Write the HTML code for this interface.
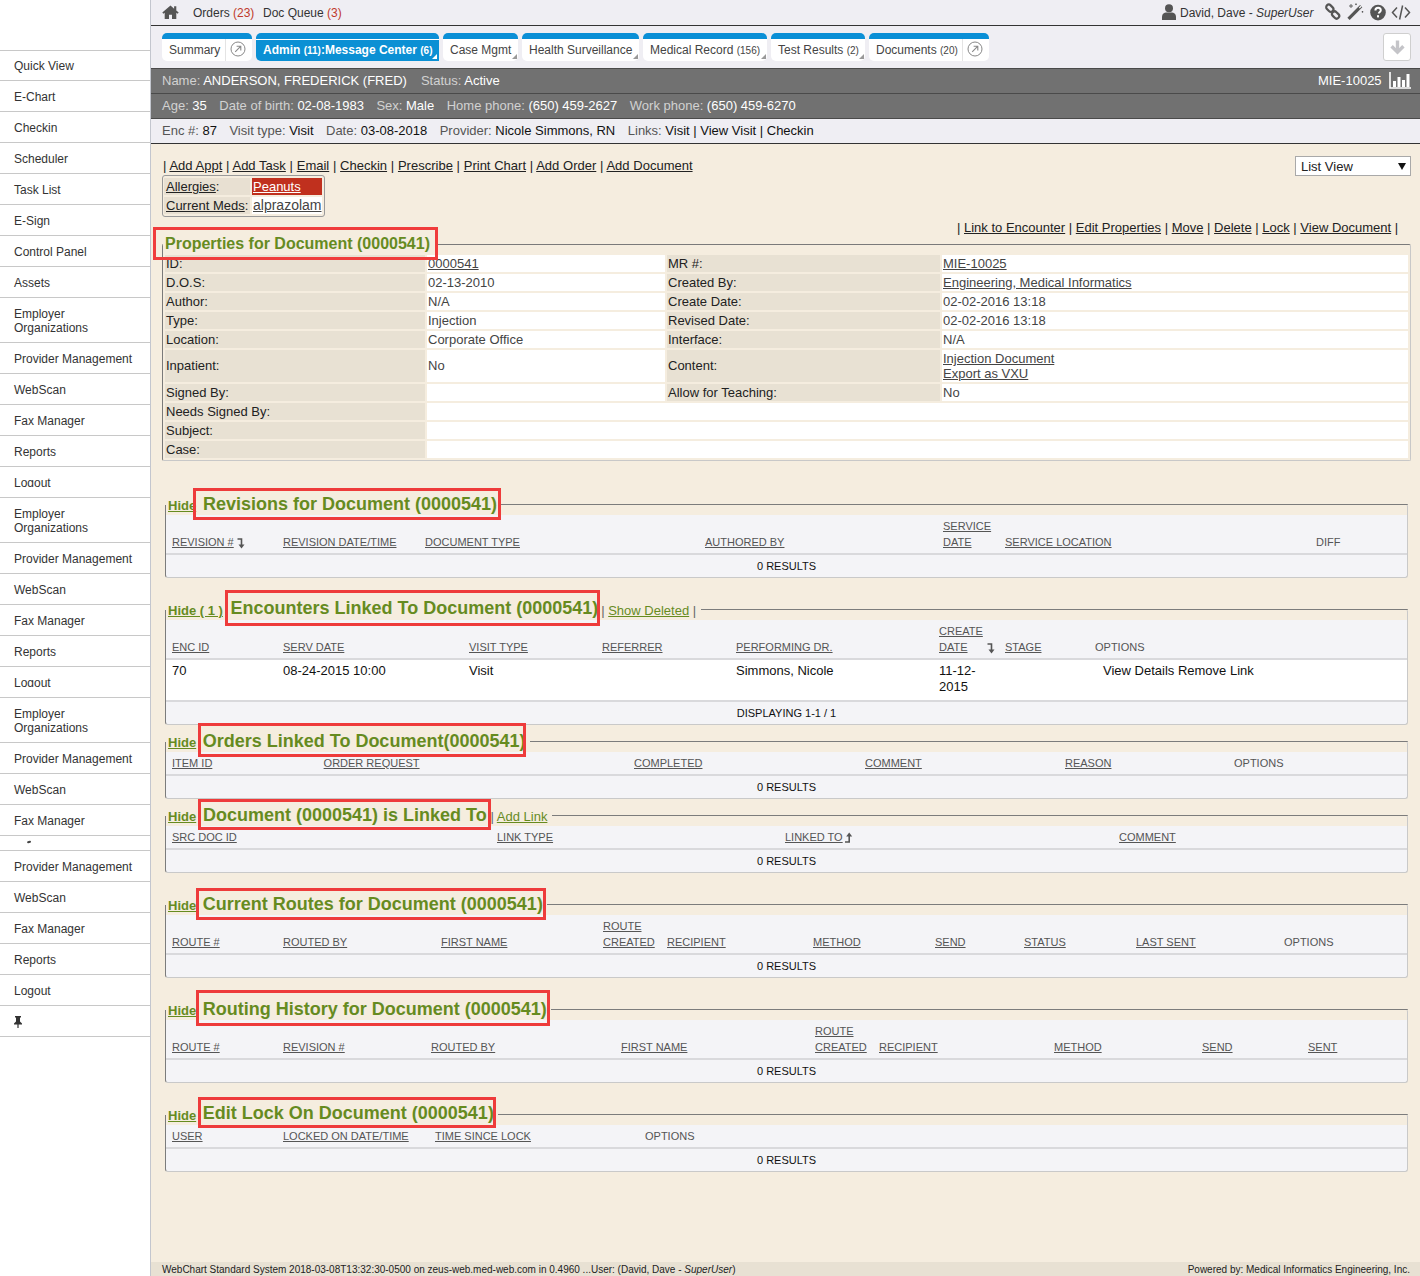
<!DOCTYPE html>
<html><head><meta charset="utf-8">
<style>
*{box-sizing:border-box;margin:0;padding:0}
html,body{width:1420px;height:1276px;overflow:hidden;background:#f5eddf;font-family:"Liberation Sans",sans-serif;color:#222}
.abs{position:absolute}
#side{position:absolute;left:0;top:0;width:151px;height:1276px;background:#fff;border-right:1px solid #c3c6ce}
#side .it{position:absolute;left:0;width:150px;border-top:1px solid #c8c8c8;font-size:12px;color:#333;padding-left:14px;line-height:14px}
#topbar{position:absolute;left:151px;top:0;width:1269px;height:26px;background:#efeef3;border-bottom:1px solid #333}
#tabbar{position:absolute;left:151px;top:26px;width:1269px;height:42px;background:#efeef3}
.tab{position:absolute;top:33px;height:28px;background:#fff;border-top:6px solid #0a8fd6;border-radius:5px;font-size:12px;color:#444;line-height:16px;white-space:nowrap}
.tab small{font-size:10px}
#pname{position:absolute;left:151px;top:68px;width:1269px;height:26px;background:#717171;border-top:1px solid #4a4a4a;border-bottom:1px solid #4a4a4a;font-size:13px;color:#fff}
#page{position:absolute;left:151px;top:94px;width:1269px;height:25px;background:#717171;border-bottom:1px solid #4a4a4a;font-size:13px;color:#fff}
#penc{position:absolute;left:151px;top:119px;width:1269px;height:25px;background:#efeef3;border-bottom:1px solid #333;font-size:13px;color:#111}
.lbl{color:#d2d2d2}
.sp{display:inline-block;width:12.5px}
.lbl2{color:#555}
u{text-decoration:underline}
a{color:inherit}
.t13{font-size:13px}
.legend{position:absolute;font-weight:bold;font-size:18px;color:#668b1f;white-space:nowrap}
.rbox{position:absolute;border:3px solid #ee3b3b}
.fs{position:absolute;left:165px;width:1244px;border-left:1px solid #7a7a7a;border-top:1px solid #7a7a7a;border-right:1px solid #c8c8c8;border-bottom:1px solid #c8c8c8;border-radius:3px}
.tbl{position:absolute;left:166px;width:1242px;background:#f4f4f7}
.hd{position:absolute;font-size:11px;color:#555;text-decoration:underline;white-space:nowrap;line-height:16px}
.hdn{position:absolute;font-size:11px;color:#555;white-space:nowrap;line-height:16px}
.res{position:absolute;font-size:11px;color:#111;white-space:nowrap}
.hide{position:absolute;font-size:13px;font-weight:bold;color:#668b1f;text-decoration:underline;white-space:nowrap}
.pc{position:absolute;font-size:13px;line-height:15px;padding-left:1px;white-space:nowrap}
.pl{background:#e8e1d3;color:#222}
.pv{background:#fff;color:#444}
</style></head><body>

<div id="side">
<div class="it" style="top:50px;height:30px;padding-top:8px">Quick View</div>
<div class="it" style="top:80px;height:31px;padding-top:9px">E-Chart</div>
<div class="it" style="top:111px;height:31px;padding-top:9px">Checkin</div>
<div class="it" style="top:142px;height:31px;padding-top:9px">Scheduler</div>
<div class="it" style="top:173px;height:31px;padding-top:9px">Task List</div>
<div class="it" style="top:204px;height:31px;padding-top:9px">E-Sign</div>
<div class="it" style="top:235px;height:31px;padding-top:9px">Control Panel</div>
<div class="it" style="top:266px;height:31px;padding-top:9px">Assets</div>
<div class="it" style="top:297px;height:45px;padding-top:9px">Employer<br>Organizations</div>
<div class="it" style="top:342px;height:31px;padding-top:9px">Provider Management</div>
<div class="it" style="top:373px;height:31px;padding-top:9px">WebScan</div>
<div class="it" style="top:404px;height:31px;padding-top:9px">Fax Manager</div>
<div class="it" style="top:435px;height:31px;padding-top:9px">Reports</div>
<div class="it" style="top:466px;height:31px"><div style="position:absolute;left:14px;top:9px;height:11px;overflow:hidden"><div style="margin-top:0px">Logout</div></div></div>
<div class="it" style="top:497px;height:45px;padding-top:9px">Employer<br>Organizations</div>
<div class="it" style="top:542px;height:31px;padding-top:9px">Provider Management</div>
<div class="it" style="top:573px;height:31px;padding-top:9px">WebScan</div>
<div class="it" style="top:604px;height:31px;padding-top:9px">Fax Manager</div>
<div class="it" style="top:635px;height:31px;padding-top:9px">Reports</div>
<div class="it" style="top:666px;height:31px"><div style="position:absolute;left:14px;top:9px;height:11px;overflow:hidden"><div style="margin-top:0px">Logout</div></div></div>
<div class="it" style="top:697px;height:45px;padding-top:9px">Employer<br>Organizations</div>
<div class="it" style="top:742px;height:31px;padding-top:9px">Provider Management</div>
<div class="it" style="top:773px;height:31px;padding-top:9px">WebScan</div>
<div class="it" style="top:804px;height:31px;padding-top:9px">Fax Manager</div>
<div class="it" style="top:835px;height:15px"><div class="abs" style="left:27px;top:5px;width:4px;height:1.5px;background:#444;border-radius:1px;transform:rotate(-15deg)"></div></div>
<div class="it" style="top:850px;height:31px;padding-top:9px">Provider Management</div>
<div class="it" style="top:881px;height:31px;padding-top:9px">WebScan</div>
<div class="it" style="top:912px;height:31px;padding-top:9px">Fax Manager</div>
<div class="it" style="top:943px;height:31px;padding-top:9px">Reports</div>
<div class="it" style="top:974px;height:31px;padding-top:9px">Logout</div>
<div class="it" style="top:1005px;height:31px"><svg style="position:absolute;left:13px;top:10px" width="10" height="12" viewBox="0 0 10 12"><path d="M2 0h6v1.5H7v4l2 2v1H5.6V12h-1.2V8.5H1v-1l2-2v-4H2z" fill="#333"/></svg></div>
<div class="it" style="top:1036px;height:1px"></div>
</div>

<div id="topbar">
<svg class="abs" style="left:11px;top:5px" width="17" height="14" viewBox="0 0 17 14"><path d="M8.5 0.5L0.3 7.6l1.1 1.2 1.3-1.1V14h4.3V9.8h3V14h4.3V7.7l1.3 1.1 1.1-1.2-2.4-2.1V1.2h-2.2v2.5z" fill="#555"/></svg>
<div class="abs" style="left:42px;top:6px;font-size:12px;color:#333;white-space:nowrap">Orders <span style="color:#c0392b">(23)</span></div>
<div class="abs" style="left:112px;top:6px;font-size:12px;color:#333;white-space:nowrap">Doc Queue <span style="color:#c0392b">(3)</span></div>
<svg class="abs" style="left:1011px;top:4px" width="14" height="16" viewBox="0 0 14 16"><circle cx="7" cy="4.2" r="4" fill="#555"/><path d="M0 16v-3.5C0 10 2.5 8.6 4 8.6h6c1.5 0 4 1.4 4 3.9V16z" fill="#555"/></svg>
<div class="abs" style="left:1029px;top:6px;font-size:12px;color:#333;white-space:nowrap">David, Dave - <i>SuperUser</i></div>
<svg class="abs" style="left:1173px;top:3px" width="18" height="18" viewBox="0 0 18 18"><g fill="none" stroke="#555" stroke-width="2.2"><rect x="1.8" y="2.6" width="8" height="5.2" rx="2.6" transform="rotate(45 5.8 5.2)"/><rect x="7.6" y="9.4" width="8" height="5.2" rx="2.6" transform="rotate(45 11.6 12)"/></g></svg>
<svg class="abs" style="left:1196px;top:3px" width="18" height="18" viewBox="0 0 18 18"><path d="M1.5 15.8L14.2 3.1" stroke="#555" stroke-width="3.2"/><path d="M12.3 5L14.2 3.1" stroke="#fff" stroke-width="1.2"/><path d="M4 1v4M2 3h4M9 0.5v1.6M8.2 1.3h1.6M15.5 8v1.6M14.7 8.8h1.6" stroke="#555" stroke-width="0.9"/></svg>
<svg class="abs" style="left:1219px;top:4px" width="17" height="17" viewBox="0 0 17 17"><circle cx="8" cy="8.6" r="7.8" fill="#555"/><path d="M5.4 6.4c0-1.8 1.2-2.7 2.7-2.7s2.7 0.9 2.7 2.5c0 1.7-2 1.8-2 3.4" fill="none" stroke="#fff" stroke-width="2"/><rect x="7" y="11.2" width="2" height="2.2" fill="#fff"/></svg>
<svg class="abs" style="left:1240px;top:4px" width="20" height="17" viewBox="0 0 20 17"><path d="M6 3.5L1.5 8.5 6 13.5M14 3.5l4.5 5-4.5 5M11.6 1.5L8.6 15.5" fill="none" stroke="#555" stroke-width="1.5"/></svg>
</div>
<div id="tabbar"></div>
<div class="tab" style="left:162px;width:90px"><span class="abs" style="left:7px;top:3px">Summary</span><div class="abs" style="left:63px;top:0;width:1px;height:22px;background:#e4e4e4"></div><svg class="abs" style="left:68px;top:2px" width="16" height="16" viewBox="0 0 16 16"><circle cx="8" cy="8" r="7" fill="none" stroke="#888" stroke-width="1"/><path d="M5.2 10.8L10.6 5.4M6.6 5.2h4.2v4.2" fill="none" stroke="#888" stroke-width="1.1"/></svg></div>
<div class="tab" style="left:256px;width:183px;background:#0b90d4;border-radius:5px 5px 0 5px"><div class="abs" style="left:0;top:0;width:183px;height:1px;background:#fff"></div><span class="abs" style="left:7px;top:3px;color:#fff;font-weight:bold">Admin <small>(11)</small>:Message Center <small>(6)</small></span><svg class="abs" style="left:176px;top:15px" width="5" height="5" viewBox="0 0 5 5"><path d="M5 0V5H0z" fill="#fff"/></svg></div>
<div class="tab" style="left:443px;width:75px"><span class="abs" style="left:7px;top:3px">Case Mgmt</span><svg class="abs" style="left:69px;top:15px" width="5" height="5" viewBox="0 0 5 5"><path d="M5 0V5H0z" fill="#999"/></svg></div>
<div class="tab" style="left:522px;width:117px"><span class="abs" style="left:7px;top:3px">Health Surveillance</span><svg class="abs" style="left:111px;top:15px" width="5" height="5" viewBox="0 0 5 5"><path d="M5 0V5H0z" fill="#999"/></svg></div>
<div class="tab" style="left:643px;width:124px"><span class="abs" style="left:7px;top:3px">Medical Record <small>(156)</small></span><svg class="abs" style="left:118px;top:15px" width="5" height="5" viewBox="0 0 5 5"><path d="M5 0V5H0z" fill="#999"/></svg></div>
<div class="tab" style="left:771px;width:94px"><span class="abs" style="left:7px;top:3px">Test Results <small>(2)</small></span><svg class="abs" style="left:88px;top:15px" width="5" height="5" viewBox="0 0 5 5"><path d="M5 0V5H0z" fill="#999"/></svg></div>
<div class="tab" style="left:869px;width:120px"><span class="abs" style="left:7px;top:3px">Documents <small>(20)</small></span><div class="abs" style="left:93px;top:0;width:1px;height:22px;background:#e4e4e4"></div><svg class="abs" style="left:98px;top:2px" width="16" height="16" viewBox="0 0 16 16"><circle cx="8" cy="8" r="7" fill="none" stroke="#888" stroke-width="1"/><path d="M5.2 10.8L10.6 5.4M6.6 5.2h4.2v4.2" fill="none" stroke="#888" stroke-width="1.1"/></svg></div>
<div class="abs" style="left:1383px;top:33px;width:28px;height:28px;background:#fff;border:1px solid #cfcfcf;border-radius:3px"><svg class="abs" style="left:5px;top:5px" width="17" height="17" viewBox="0 0 17 17"><path d="M8.5 1.5v11" stroke="#c4c4c8" stroke-width="3.4"/><path d="M2.6 7.3L8.5 13.2l5.9-5.9" fill="none" stroke="#c4c4c8" stroke-width="3.4" stroke-linejoin="miter"/></svg></div>
<div id="pname"><div class="abs" style="left:11px;top:4px;white-space:nowrap"><span class="lbl">Name:</span> ANDERSON, FREDERICK (FRED)<span style="display:inline-block;width:14px"></span><span class="lbl">Status:</span> Active</div>
<div class="abs" style="left:1167px;top:4px">MIE-10025</div>
<svg class="abs" style="left:1238px;top:3px" width="22" height="17" viewBox="0 0 22 17"><path d="M1 0v16h21" fill="none" stroke="#fff" stroke-width="1.6"/><rect x="4" y="9" width="3" height="6" fill="#fff"/><rect x="8.5" y="5" width="3" height="10" fill="#fff"/><rect x="13" y="8" width="3" height="7" fill="#fff"/><rect x="17.5" y="2" width="3" height="13" fill="#fff"/></svg>
</div>
<div id="page"><div class="abs" style="left:11px;top:4px;white-space:nowrap"><span class="lbl">Age:</span> 35<span class="sp"></span><span class="lbl">Date of birth:</span> 02-08-1983<span class="sp"></span><span class="lbl">Sex:</span> Male<span class="sp"></span><span class="lbl">Home phone:</span> (650) 459-2627<span class="sp"></span><span class="lbl">Work phone:</span> (650) 459-6270</div></div>
<div id="penc"><div class="abs" style="left:11px;top:4px;white-space:nowrap"><span class="lbl2">Enc #:</span> 87<span class="sp"></span><span class="lbl2">Visit type:</span> Visit<span class="sp"></span><span class="lbl2">Date:</span> 03-08-2018<span class="sp"></span><span class="lbl2">Provider:</span> Nicole Simmons, RN<span class="sp"></span><span class="lbl2">Links:</span> Visit | View Visit | Checkin</div></div>


<!-- content -->
<div class="abs t13" style="left:163px;top:158px;white-space:nowrap;color:#222;word-spacing:0.13px">| <u>Add Appt</u> | <u>Add Task</u> | <u>Email</u> | <u>Checkin</u> | <u>Prescribe</u> | <u>Print Chart</u> | <u>Add Order</u> | <u>Add Document</u></div>
<div class="abs" style="left:1295px;top:156px;width:116px;height:20px;background:#fff;border:1px solid #a9a9a9;font-size:13px;color:#222;padding:2px 0 0 5px">List View<svg class="abs" style="left:102px;top:6px" width="8" height="7" viewBox="0 0 8 7"><path d="M0 0h8L4 7z" fill="#111"/></svg></div>
<div class="abs" style="left:162px;top:175px;width:163px;height:42px;border:1px solid #9a9a9a;border-radius:3px"></div>
<div class="abs" style="left:164px;top:178px;width:86px;height:17px;background:#e8e0d2"></div>
<div class="abs" style="left:252px;top:178px;width:70px;height:17px;background:#c0301e"></div>
<div class="abs" style="left:164px;top:197px;width:86px;height:17px;background:#e8e0d2"></div>
<div class="abs" style="left:252px;top:197px;width:70px;height:17px;background:#fff"></div>
<div class="abs t13" style="left:166px;top:179px;color:#222"><u>Allergies</u>:</div>
<div class="abs t13" style="left:253px;top:179px;color:#fff"><u>Peanuts</u></div>
<div class="abs t13" style="left:166px;top:198px;color:#222"><u>Current Meds</u>:</div>
<div class="abs" style="left:253px;top:197px;color:#444;font-size:14px"><u>alprazolam</u></div>
<div class="abs t13" style="left:957px;top:220px;white-space:nowrap;color:#222">| <u>Link to Encounter</u> | <u>Edit Properties</u> | <u>Move</u> | <u>Delete</u> | <u>Lock</u> | <u>View Document</u> |</div>
<div class="abs" style="left:162px;top:244px;width:1249px;height:217px;border-left:1px solid #7a7a7a;border-top:1px solid #7a7a7a;border-right:1px solid #c8c8c8;border-bottom:1px solid #c8c8c8;border-radius:2px"></div>
<div class="pc pl" style="left:165px;top:255px;width:260px;height:17px;padding-top:1px">ID:</div>
<div class="pc pv" style="left:427px;top:255px;width:238px;height:17px;padding-top:1px"><u>0000541</u></div>
<div class="pc pl" style="left:667px;top:255px;width:273px;height:17px;padding-top:1px">MR #:</div>
<div class="pc pv" style="left:942px;top:255px;width:466px;height:17px;padding-top:1px"><u>MIE-10025</u></div>
<div class="pc pl" style="left:165px;top:274px;width:260px;height:17px;padding-top:1px">D.O.S:</div>
<div class="pc pv" style="left:427px;top:274px;width:238px;height:17px;padding-top:1px">02-13-2010</div>
<div class="pc pl" style="left:667px;top:274px;width:273px;height:17px;padding-top:1px">Created By:</div>
<div class="pc pv" style="left:942px;top:274px;width:466px;height:17px;padding-top:1px"><u>Engineering, Medical Informatics</u></div>
<div class="pc pl" style="left:165px;top:293px;width:260px;height:17px;padding-top:1px">Author:</div>
<div class="pc pv" style="left:427px;top:293px;width:238px;height:17px;padding-top:1px">N/A</div>
<div class="pc pl" style="left:667px;top:293px;width:273px;height:17px;padding-top:1px">Create Date:</div>
<div class="pc pv" style="left:942px;top:293px;width:466px;height:17px;padding-top:1px">02-02-2016 13:18</div>
<div class="pc pl" style="left:165px;top:312px;width:260px;height:17px;padding-top:1px">Type:</div>
<div class="pc pv" style="left:427px;top:312px;width:238px;height:17px;padding-top:1px">Injection</div>
<div class="pc pl" style="left:667px;top:312px;width:273px;height:17px;padding-top:1px">Revised Date:</div>
<div class="pc pv" style="left:942px;top:312px;width:466px;height:17px;padding-top:1px">02-02-2016 13:18</div>
<div class="pc pl" style="left:165px;top:331px;width:260px;height:17px;padding-top:1px">Location:</div>
<div class="pc pv" style="left:427px;top:331px;width:238px;height:17px;padding-top:1px">Corporate Office</div>
<div class="pc pl" style="left:667px;top:331px;width:273px;height:17px;padding-top:1px">Interface:</div>
<div class="pc pv" style="left:942px;top:331px;width:466px;height:17px;padding-top:1px">N/A</div>
<div class="pc pl" style="left:165px;top:350px;width:260px;height:32px;padding-top:8px">Inpatient:</div>
<div class="pc pv" style="left:427px;top:350px;width:238px;height:32px;padding-top:8px">No</div>
<div class="pc pl" style="left:667px;top:350px;width:273px;height:32px;padding-top:8px">Content:</div>
<div class="pc pv" style="left:942px;top:350px;width:466px;height:32px;padding-top:1px"><u>Injection Document</u><br><u>Export as VXU</u></div>
<div class="pc pl" style="left:165px;top:384px;width:260px;height:17px;padding-top:1px">Signed By:</div>
<div class="pc pv" style="left:427px;top:384px;width:238px;height:17px;padding-top:1px"></div>
<div class="pc pl" style="left:667px;top:384px;width:273px;height:17px;padding-top:1px">Allow for Teaching:</div>
<div class="pc pv" style="left:942px;top:384px;width:466px;height:17px;padding-top:1px">No</div>
<div class="pc pl" style="left:165px;top:403px;width:260px;height:17px;padding-top:1px">Needs Signed By:</div>
<div class="pc pv" style="left:427px;top:403px;width:981px;height:17px;padding-top:1px"></div>
<div class="pc pl" style="left:165px;top:422px;width:260px;height:17px;padding-top:1px">Subject:</div>
<div class="pc pv" style="left:427px;top:422px;width:981px;height:17px;padding-top:1px"></div>
<div class="pc pl" style="left:165px;top:441px;width:260px;height:17px;padding-top:1px">Case:</div>
<div class="pc pv" style="left:427px;top:441px;width:981px;height:17px;padding-top:1px"></div>
<div class="abs" style="left:163px;top:243px;width:273px;height:3px;background:#f5eddf"></div>
<div class="abs" style="left:165px;top:235px;font-size:16px;font-weight:bold;color:#668b1f;white-space:nowrap">Properties for Document (0000541)</div>
<div class="abs" style="left:153px;top:227px;width:285px;height:33px;border:3px solid #f03c3c"></div>
<!-- sections -->
<div class="abs" style="left:166px;top:515px;width:1241px;height:38px;background:#f4f4f7"></div>
<div class="hd" style="left:172px;top:534px">REVISION #</div>
<div class="hd" style="left:283px;top:534px">REVISION DATE/TIME</div>
<div class="hd" style="left:425px;top:534px">DOCUMENT TYPE</div>
<div class="hd" style="left:705px;top:534px">AUTHORED BY</div>
<div class="hd" style="left:943px;top:518px">SERVICE<br>DATE</div>
<div class="hd" style="left:1005px;top:534px">SERVICE LOCATION</div>
<div class="hdn" style="left:1316px;top:534px">DIFF</div>
<svg class="abs" style="left:237px;top:538px" width="8" height="11" viewBox="0 0 8 11"><path d="M0.5 1h4v6" fill="none" stroke="#555" stroke-width="1.6"/><path d="M1.5 6.5h6L4.5 10.5z" fill="#555"/></svg>
<div class="abs" style="left:166px;top:553px;width:1241px;height:2px;background:#d9d9dc"></div>
<div class="abs" style="left:166px;top:555px;width:1241px;height:22px;background:#f4f4f7"></div>
<div class="res" style="left:166px;top:558px;width:1241px;text-align:center;line-height:16px">0 RESULTS</div>
<div class="abs" style="left:165px;top:504px;width:1243px;height:74px;border-left:1px solid #7c7c7c;border-right:1px solid #c9c9c9;border-bottom:1px solid #c9c9c9;border-radius:0 3px 3px 3px"></div>
<div class="abs" style="left:501px;top:504px;width:907px;height:1px;background:#7c7c7c;border-top-right-radius:2px"></div>
<div class="abs" style="left:164px;top:503px;width:3px;height:2px;background:#f5eddf"></div>
<div class="hide" style="left:168px;top:498.0px">Hide</div>
<div class="legend" style="left:203px;top:493.7px;line-height:20px">Revisions for Document (0000541)</div>
<div class="rbox" style="left:193px;top:488px;width:308px;height:32px"></div>

<div class="abs" style="left:166px;top:620px;width:1241px;height:38px;background:#f4f4f7"></div>
<div class="hd" style="left:172px;top:639px">ENC ID</div>
<div class="hd" style="left:283px;top:639px">SERV DATE</div>
<div class="hd" style="left:469px;top:639px">VISIT TYPE</div>
<div class="hd" style="left:602px;top:639px">REFERRER</div>
<div class="hd" style="left:736px;top:639px">PERFORMING DR.</div>
<div class="hd" style="left:939px;top:623px">CREATE<br>DATE</div>
<div class="hd" style="left:1005px;top:639px">STAGE</div>
<div class="hdn" style="left:1095px;top:639px">OPTIONS</div>
<svg class="abs" style="left:987px;top:643px" width="8" height="11" viewBox="0 0 8 11"><path d="M0.5 1h4v6" fill="none" stroke="#555" stroke-width="1.6"/><path d="M1.5 6.5h6L4.5 10.5z" fill="#555"/></svg>
<div class="abs" style="left:166px;top:658px;width:1241px;height:2px;background:#d9d9dc"></div>
<div class="abs" style="left:166px;top:660px;width:1241px;height:40px;background:#fff"></div>
<div class="abs" style="left:172px;top:663px;font-size:13px;line-height:16px;color:#111;white-space:nowrap">70</div>
<div class="abs" style="left:283px;top:663px;font-size:13px;line-height:16px;color:#111;white-space:nowrap">08-24-2015 10:00</div>
<div class="abs" style="left:469px;top:663px;font-size:13px;line-height:16px;color:#111;white-space:nowrap">Visit</div>
<div class="abs" style="left:736px;top:663px;font-size:13px;line-height:16px;color:#111;white-space:nowrap">Simmons, Nicole</div>
<div class="abs" style="left:939px;top:663px;font-size:13px;line-height:16px;color:#111;white-space:nowrap">11-12-<br>2015</div>
<div class="abs" style="left:1103px;top:663px;font-size:13px;line-height:16px;color:#111;white-space:nowrap">View Details Remove Link</div>
<div class="abs" style="left:166px;top:700px;width:1241px;height:2px;background:#d9d9dc"></div>
<div class="abs" style="left:166px;top:702px;width:1241px;height:22px;background:#f4f4f7"></div>
<div class="res" style="left:166px;top:705px;width:1241px;text-align:center;line-height:16px">DISPLAYING 1-1 / 1</div>
<div class="abs" style="left:165px;top:609px;width:1243px;height:116px;border-left:1px solid #7c7c7c;border-right:1px solid #c9c9c9;border-bottom:1px solid #c9c9c9;border-radius:0 3px 3px 3px"></div>
<div class="abs" style="left:701px;top:609px;width:707px;height:1px;background:#7c7c7c;border-top-right-radius:2px"></div>
<div class="abs" style="left:164px;top:608px;width:3px;height:2px;background:#f5eddf"></div>
<div class="hide" style="left:168px;top:603.0px">Hide ( 1 )</div>
<div class="abs" style="left:601.2px;top:603.0px;font-size:13px;line-height:15px;color:#668b1f;white-space:nowrap"><span style="color:#666">|</span> <u>Show Deleted</u> <span style="color:#666">|</span></div>
<div class="legend" style="left:230.5px;top:598.3px;line-height:20px">Encounters Linked To Document (0000541)</div>
<div class="rbox" style="left:225px;top:590px;width:375px;height:36px"></div>

<div class="abs" style="left:166px;top:752px;width:1241px;height:22px;background:#f4f4f7"></div>
<div class="hd" style="left:172px;top:755px">ITEM ID</div>
<div class="hd" style="left:323.6px;top:755px">ORDER REQUEST</div>
<div class="hd" style="left:634px;top:755px">COMPLETED</div>
<div class="hd" style="left:865px;top:755px">COMMENT</div>
<div class="hd" style="left:1065px;top:755px">REASON</div>
<div class="hdn" style="left:1234px;top:755px">OPTIONS</div>
<div class="abs" style="left:166px;top:774px;width:1241px;height:2px;background:#d9d9dc"></div>
<div class="abs" style="left:166px;top:776px;width:1241px;height:22px;background:#f4f4f7"></div>
<div class="res" style="left:166px;top:779px;width:1241px;text-align:center;line-height:16px">0 RESULTS</div>
<div class="abs" style="left:165px;top:741px;width:1243px;height:58px;border-left:1px solid #7c7c7c;border-right:1px solid #c9c9c9;border-bottom:1px solid #c9c9c9;border-radius:0 3px 3px 3px"></div>
<div class="abs" style="left:530px;top:741px;width:878px;height:1px;background:#7c7c7c;border-top-right-radius:2px"></div>
<div class="abs" style="left:164px;top:740px;width:3px;height:2px;background:#f5eddf"></div>
<div class="hide" style="left:168px;top:734.8px">Hide</div>
<div class="legend" style="left:202.7px;top:730.5px;line-height:20px">Orders Linked To Document(0000541)</div>
<div class="rbox" style="left:198px;top:723px;width:328px;height:34px"></div>

<div class="abs" style="left:166px;top:826px;width:1241px;height:22px;background:#f4f4f7"></div>
<div class="hd" style="left:172px;top:829px">SRC DOC ID</div>
<div class="hd" style="left:497px;top:829px">LINK TYPE</div>
<div class="hd" style="left:785px;top:829px">LINKED TO</div>
<div class="hd" style="left:1119px;top:829px">COMMENT</div>
<svg class="abs" style="left:845px;top:832px" width="8" height="11" viewBox="0 0 8 11"><path d="M0 10h4.2V4" fill="none" stroke="#555" stroke-width="1.6"/><path d="M1.2 4.5h6L4.2 0.5z" fill="#555"/></svg>
<div class="abs" style="left:166px;top:848px;width:1241px;height:2px;background:#d9d9dc"></div>
<div class="abs" style="left:166px;top:850px;width:1241px;height:22px;background:#f4f4f7"></div>
<div class="res" style="left:166px;top:853px;width:1241px;text-align:center;line-height:16px">0 RESULTS</div>
<div class="abs" style="left:165px;top:815px;width:1243px;height:58px;border-left:1px solid #7c7c7c;border-right:1px solid #c9c9c9;border-bottom:1px solid #c9c9c9;border-radius:0 3px 3px 3px"></div>
<div class="abs" style="left:552px;top:815px;width:856px;height:1px;background:#7c7c7c;border-top-right-radius:2px"></div>
<div class="abs" style="left:164px;top:814px;width:3px;height:2px;background:#f5eddf"></div>
<div class="hide" style="left:168px;top:809.0px">Hide</div>
<div class="abs" style="left:490.5px;top:809.0px;font-size:13px;line-height:15px;color:#668b1f;white-space:nowrap"><span style="color:#666">|</span> <u>Add Link</u></div>
<div class="legend" style="left:203px;top:804.7px;line-height:20px">Document (0000541) is Linked To</div>
<div class="rbox" style="left:198px;top:799px;width:293px;height:31px"></div>

<div class="abs" style="left:166px;top:915px;width:1241px;height:38px;background:#f4f4f7"></div>
<div class="hd" style="left:172px;top:934px">ROUTE #</div>
<div class="hd" style="left:283px;top:934px">ROUTED BY</div>
<div class="hd" style="left:441px;top:934px">FIRST NAME</div>
<div class="hd" style="left:603px;top:918px">ROUTE<br>CREATED</div>
<div class="hd" style="left:667px;top:934px">RECIPIENT</div>
<div class="hd" style="left:813px;top:934px">METHOD</div>
<div class="hd" style="left:935px;top:934px">SEND</div>
<div class="hd" style="left:1024px;top:934px">STATUS</div>
<div class="hd" style="left:1136px;top:934px">LAST SENT</div>
<div class="hdn" style="left:1284px;top:934px">OPTIONS</div>
<div class="abs" style="left:166px;top:953px;width:1241px;height:2px;background:#d9d9dc"></div>
<div class="abs" style="left:166px;top:955px;width:1241px;height:22px;background:#f4f4f7"></div>
<div class="res" style="left:166px;top:958px;width:1241px;text-align:center;line-height:16px">0 RESULTS</div>
<div class="abs" style="left:165px;top:904px;width:1243px;height:74px;border-left:1px solid #7c7c7c;border-right:1px solid #c9c9c9;border-bottom:1px solid #c9c9c9;border-radius:0 3px 3px 3px"></div>
<div class="abs" style="left:547px;top:904px;width:861px;height:1px;background:#7c7c7c;border-top-right-radius:2px"></div>
<div class="abs" style="left:164px;top:903px;width:3px;height:2px;background:#f5eddf"></div>
<div class="hide" style="left:168px;top:898.0px">Hide</div>
<div class="legend" style="left:202.8px;top:893.6px;line-height:20px">Current Routes for Document (0000541)</div>
<div class="rbox" style="left:196px;top:888px;width:350px;height:32px"></div>

<div class="abs" style="left:166px;top:1020px;width:1241px;height:38px;background:#f4f4f7"></div>
<div class="hd" style="left:172px;top:1039px">ROUTE #</div>
<div class="hd" style="left:283px;top:1039px">REVISION #</div>
<div class="hd" style="left:431px;top:1039px">ROUTED BY</div>
<div class="hd" style="left:621px;top:1039px">FIRST NAME</div>
<div class="hd" style="left:815px;top:1023px">ROUTE<br>CREATED</div>
<div class="hd" style="left:879px;top:1039px">RECIPIENT</div>
<div class="hd" style="left:1054px;top:1039px">METHOD</div>
<div class="hd" style="left:1202px;top:1039px">SEND</div>
<div class="hd" style="left:1308px;top:1039px">SENT</div>
<div class="abs" style="left:166px;top:1058px;width:1241px;height:2px;background:#d9d9dc"></div>
<div class="abs" style="left:166px;top:1060px;width:1241px;height:22px;background:#f4f4f7"></div>
<div class="res" style="left:166px;top:1063px;width:1241px;text-align:center;line-height:16px">0 RESULTS</div>
<div class="abs" style="left:165px;top:1009px;width:1243px;height:74px;border-left:1px solid #7c7c7c;border-right:1px solid #c9c9c9;border-bottom:1px solid #c9c9c9;border-radius:0 3px 3px 3px"></div>
<div class="abs" style="left:551px;top:1009px;width:857px;height:1px;background:#7c7c7c;border-top-right-radius:2px"></div>
<div class="abs" style="left:164px;top:1008px;width:3px;height:2px;background:#f5eddf"></div>
<div class="hide" style="left:168px;top:1003.0px">Hide</div>
<div class="legend" style="left:202.8px;top:998.5px;line-height:20px">Routing History for Document (0000541)</div>
<div class="rbox" style="left:196px;top:990px;width:354px;height:36px"></div>

<div class="abs" style="left:166px;top:1125px;width:1241px;height:22px;background:#f4f4f7"></div>
<div class="hd" style="left:172px;top:1128px">USER</div>
<div class="hd" style="left:283px;top:1128px">LOCKED ON DATE/TIME</div>
<div class="hd" style="left:435px;top:1128px">TIME SINCE LOCK</div>
<div class="hdn" style="left:645px;top:1128px">OPTIONS</div>
<div class="abs" style="left:166px;top:1147px;width:1241px;height:2px;background:#d9d9dc"></div>
<div class="abs" style="left:166px;top:1149px;width:1241px;height:22px;background:#f4f4f7"></div>
<div class="res" style="left:166px;top:1152px;width:1241px;text-align:center;line-height:16px">0 RESULTS</div>
<div class="abs" style="left:165px;top:1114px;width:1243px;height:58px;border-left:1px solid #7c7c7c;border-right:1px solid #c9c9c9;border-bottom:1px solid #c9c9c9;border-radius:0 3px 3px 3px"></div>
<div class="abs" style="left:498px;top:1114px;width:910px;height:1px;background:#7c7c7c;border-top-right-radius:2px"></div>
<div class="abs" style="left:164px;top:1113px;width:3px;height:2px;background:#f5eddf"></div>
<div class="hide" style="left:168px;top:1108.0px">Hide</div>
<div class="legend" style="left:202.8px;top:1103.3px;line-height:20px">Edit Lock On Document (0000541)</div>
<div class="rbox" style="left:198px;top:1097px;width:298px;height:31px"></div>
<!-- /sections -->

<div class="abs" style="left:151px;top:1262px;width:1269px;height:14px;background:#e8e1d3;font-size:10px;line-height:12px;color:#222;white-space:nowrap">
<div class="abs" style="left:11px;top:2px">WebChart Standard System 2018-03-08T13:32:30-0500 on zeus-web.med-web.com in 0.4960 ...User: (David, Dave - <i>SuperUser</i>)</div>
<div class="abs" style="right:10px;top:2px">Powered by: Medical Informatics Engineering, Inc.</div>
</div>
</body></html>
